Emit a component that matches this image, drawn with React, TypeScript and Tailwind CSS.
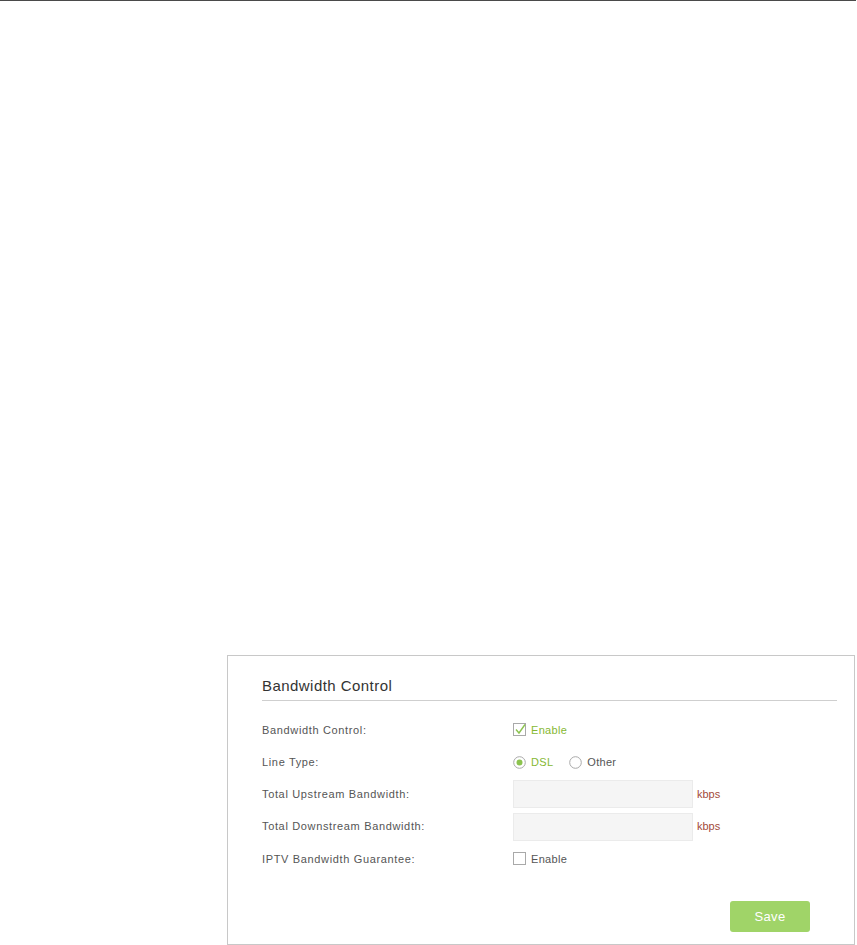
import React from "react";

const font = { fontFamily: '"Liberation Sans", Arial, sans-serif' };

function CheckBox({ checked }: { checked: boolean }) {
  return (
    <svg width="14" height="14" viewBox="0 0 14 14" className="shrink-0">
      <rect x="0.5" y="0.5" width="12" height="12" fill="#fff" stroke="#a9a9a9" />
      {checked && (
        <path d="M3 6.5 L6 10 L12 1.5" fill="none" stroke="#8cc34f" strokeWidth="1.4" />
      )}
    </svg>
  );
}

function Radio({ checked }: { checked: boolean }) {
  return (
    <svg width="13" height="13" viewBox="0 0 13 13" className="shrink-0">
      <circle cx="6.5" cy="6.5" r="5.8" fill="#fff" stroke="#a9a9a9" />
      {checked && <circle cx="6.5" cy="6.5" r="3" fill="#8cc34f" />}
    </svg>
  );
}

function Row({ label, h, children }: { label: string; h: string; children: React.ReactNode }) {
  return (
    <div className={`flex items-center ${h}`}>
      <div className="w-[251px] text-[11px] text-[#555] tracking-[0.65px]">{label}</div>
      <div className="flex items-center">{children}</div>
    </div>
  );
}

export default function App() {
  return (
    <div className="w-[857px] h-[945px] bg-white overflow-hidden" style={font}>
      <div className="h-px w-[856px] bg-[#4a4a4a]" />
      <div className="ml-[227px] mt-[654px] w-[628px] h-[290px] border border-[#c8c8c8] pl-[34px] pr-[17px] pt-[20px]">
        <div className="h-[25px] border-b border-[#cfcfcf] text-[15px] leading-[20px] text-[#333] tracking-[0.45px]">
          Bandwidth Control
        </div>
        <div className="mt-[13px] flex flex-col">
          <Row label="Bandwidth Control:" h="h-[32px]">
            <CheckBox checked />
            <span className="ml-[4px] text-[11px] text-[#86b832] tracking-[0.3px]">Enable</span>
          </Row>
          <Row label="Line Type:" h="h-[32px]">
            <Radio checked />
            <span className="ml-[5px] text-[11px] text-[#86b832] tracking-[0.3px]">DSL</span>
            <span className="ml-[16px]"><Radio checked={false} /></span>
            <span className="ml-[5px] text-[11px] text-[#555] tracking-[0.3px]">Other</span>
          </Row>
          <Row label="Total Upstream Bandwidth:" h="h-[32px]">
            <div className="w-[180px] h-[28px] bg-[#f5f5f5] border border-[#ebebeb]" />
            <span className="ml-[4px] text-[11px] text-[#a24a3a]">kbps</span>
          </Row>
          <Row label="Total Downstream Bandwidth:" h="h-[33px]">
            <div className="w-[180px] h-[28px] bg-[#f5f5f5] border border-[#ebebeb]" />
            <span className="ml-[4px] text-[11px] text-[#a24a3a]">kbps</span>
          </Row>
          <Row label="IPTV Bandwidth Guarantee:" h="h-[32px]">
            <CheckBox checked={false} />
            <span className="ml-[4px] text-[11px] text-[#555] tracking-[0.3px]">Enable</span>
          </Row>
        </div>
        <div className="flex justify-end pr-[27px] mt-[26px]">
          <button className="w-[80px] h-[31px] rounded-[3px] bg-[#a0d468] text-white text-[13px] tracking-[0.3px]">
            Save
          </button>
        </div>
      </div>
    </div>
  );
}
